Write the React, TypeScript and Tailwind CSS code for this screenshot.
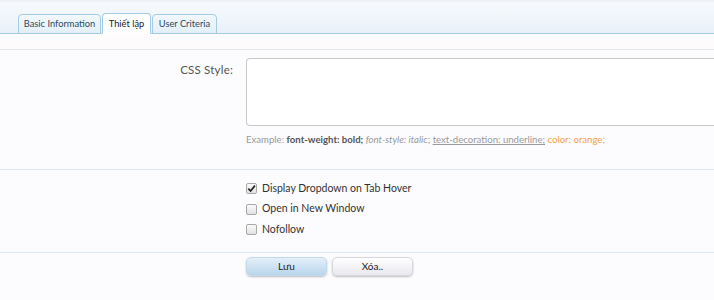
import React from 'react'

const font = { fontFamily: 'Lato, "Liberation Sans", Arial, sans-serif' }

const tabs = [
  { name: 'Basic Information', active: false, w: 'w-[83px]' },
  { name: 'Thiết lập', active: true, w: 'w-[49px]' },
  { name: 'User Criteria', active: false, w: 'w-[65px]' },
]

function Check({ checked, label }: { checked?: boolean; label: string }) {
  return (
    <label className="flex h-[20.5px] items-center gap-[5px] text-[10.5px] text-[#333]">
      <span className="flex h-[11px] w-[11px] items-center justify-center rounded-[2px] border border-[#a8a8a8] bg-gradient-to-b from-[#fafafa] to-[#e2e2e2]">
        {checked && (
          <svg viewBox="0 0 10 10" className="h-[9px] w-[9px]">
            <path d="M1.5 5.2 L4 7.8 L8.8 1.8" fill="none" stroke="#222" strokeWidth="1.8" />
          </svg>
        )}
      </span>
      {label}
    </label>
  )
}

export default function App() {
  return (
    <div className="h-[300px] w-[714px] overflow-hidden bg-[#fcfcfe]" style={font}>
      <div className="h-[2px] bg-[#eef2f7]" />
      <div className="flex h-[32px] items-end border-b border-[#a5cae4] bg-gradient-to-b from-[#f7fafd] to-[#e8f1f9] pl-[18px]">
        {tabs.map((t) => (
          <div
            key={t.name}
            className={`-mb-px mr-px flex h-[20px] items-center justify-center whitespace-nowrap rounded-t-[4px] border border-[#a5cae4] text-[9.3px] ${t.w} ${
              t.active ? 'h-[21px] border-b-white bg-white text-[#222]' : 'bg-gradient-to-b from-[#f2f8fc] to-[#e3eff8] text-[#2d4a63]'
            }`}
          >
            {t.name}
          </div>
        ))}
      </div>
      <div className="h-[16px] border-b border-[#e3e5ea] bg-[#fdfbfc]" />

      <div className="flex pt-[8px]">
        <div className="w-[233px] shrink-0 pt-[3px] text-right text-[11.5px] tracking-[0.2px] text-[#555]">CSS Style:</div>
        <div className="ml-[13px] min-w-0 flex-1">
          <div className="h-[68px] w-[480px] rounded-l-[4px] border border-r-0 border-[#c8c8c8] bg-white" />
          <p className="mt-[7px] whitespace-nowrap text-[9.6px] text-[#999]">
            Example: <b className="text-[#555]">font-weight: bold;</b> <i>font-style: italic</i>;{' '}
            <u>text-decoration: underline;</u> <span className="text-[#f3a342]">color: orange;</span>
          </p>
        </div>
      </div>

      <div className="mt-[22px] border-t border-[#dbe8f2]" />
      <div className="flex flex-col pl-[246px] pt-[8px] pb-[12px]">
        <Check checked label="Display Dropdown on Tab Hover" />
        <Check label="Open in New Window" />
        <Check label="Nofollow" />
      </div>
      <div className="border-t border-[#dbe8f2]" />
      <div className="flex gap-[5px] pl-[246px] pt-[4px]">
        <button className="h-[19px] w-[81px] rounded-[5px] border border-[#c3d9ea] bg-gradient-to-b from-[#e4f0f9] to-[#b9d5ec] text-[10px] text-[#222] shadow-[0_1px_2px_rgba(0,0,0,0.25)]">
          Lưu
        </button>
        <button className="h-[19px] w-[81px] rounded-[5px] border border-[#d8d8dc] bg-gradient-to-b from-[#ffffff] to-[#e8e8ee] text-[10px] text-[#222] shadow-[0_1px_2px_rgba(0,0,0,0.25)]">
          Xóa..
        </button>
      </div>
    </div>
  )
}
